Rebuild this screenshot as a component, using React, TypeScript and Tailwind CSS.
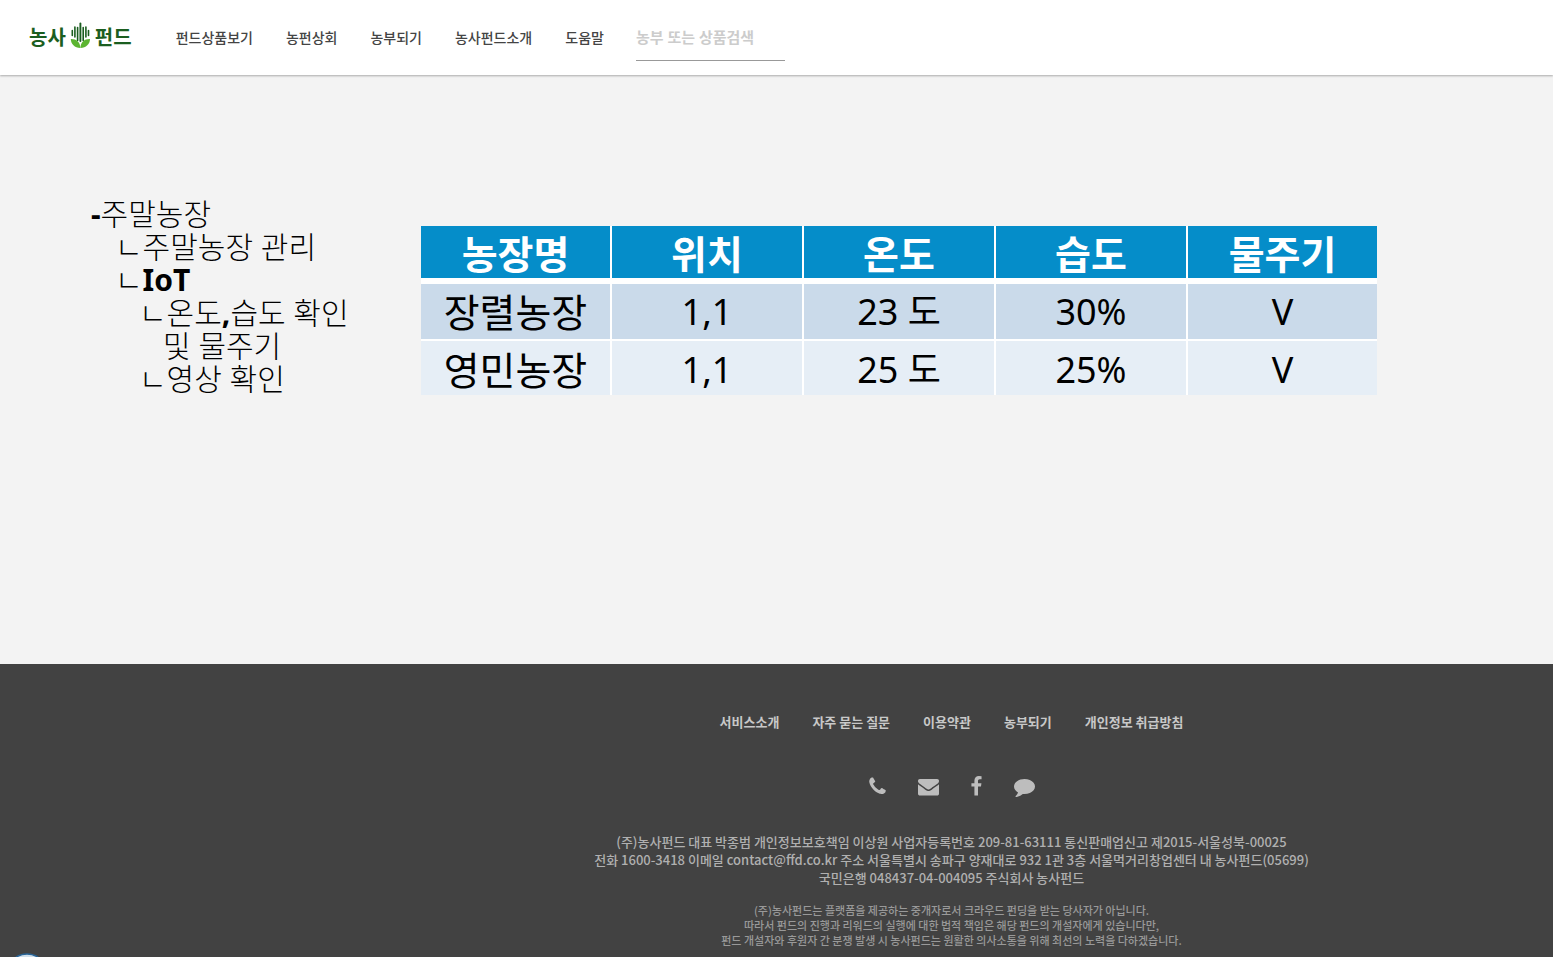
const navItems = ['펀드상품보기', '농펀상회', '농부되기', '농사펀드소개', '도움말'];
const footerLinks = ['서비스소개', '자주 묻는 질문', '이용약관', '농부되기', '개인정보 취급방침'];
const columns = ['농장명', '위치', '온도', '습도', '물주기'];
const farms = [
  { name: '장렬농장', location: '1,1', temperature: '23 도', humidity: '30%', water: 'V' },
  { name: '영민농장', location: '1,1', temperature: '25 도', humidity: '25%', water: 'V' },
];
const contacts = [
  {
    label: '전화',
    size: 'w-[17px]',
    viewBox: '171 0 1451 1792',
    path: 'M1600 1240q0 27-10 70.5t-21 68.5q-21 50-122 106-94 51-186 51-27 0-53-3.500t-57.500-12.500-47-14.500-55.500-20.500-49-18q-98-35-175-83-127-79-264-216t-216-264q-48-77-83-175-3-9-18-49t-20.500-55.500-14.500-47-12.500-57.500-3.500-53q0-92 51-186 56-101 106-122 25-11 68.500-21t70.500-10q14 0 21 3 18 6 53 76 11 19 30 54t35 63.500 31 53.500q3 4 17.500 25t21.500 35.500 7 28.500q0 20-28.500 50t-62 55-62 53-28.500 46q0 9 5 22.500t8.500 20.500 14 24 11.500 19q76 137 174 235t235 174q2 1 19 11.500t24 14 20.500 8.500 22.500 5q18 0 46-28.500t53-62 55-62 50-28.500q14 0 28.500 7t35.500 21.500 25 17.500q25 15 53.500 31t63.500 35 54 30q70 35 76 53 3 7 3 21z',
  },
  {
    label: '이메일',
    size: 'w-[21px]',
    viewBox: '0 0 1792 1792',
    path: 'M1792 710v794q0 66-47 113t-113 47h-1472q-66 0-113-47t-47-113v-794q44 49 101 87 362 246 497 345 57 42 92.500 65.500t94.500 48 110 24.500h2q51 0 110-24.500t94.500-48 92.500-65.500q170-123 498-345 57-39 100-87zm0-294q0 79-49 151t-122 123q-376 261-468 325-10 7-42.500 31t-54 38.500-52 32.500-57.500 27-50 9h-2q-23 0-50-9t-57.500-27-52-32.500-54-38.500-42.500-31q-91-64-262-182.500t-205-142.500q-62-42-117-115.500t-55-136.500q0-78 41.500-130t118.500-52h1472q65 0 112.500 47t47.500 113z',
  },
  {
    label: '페이스북',
    size: 'w-[11px]',
    viewBox: '442 0 939 1792',
    path: 'M1343 12v264h-157q-86 0-116 36t-30 108v189h293l-39 296h-254v759h-306v-759h-255v-296h255v-218q0-186 104-288.500t277-102.500q147 0 228 12z',
  },
  {
    label: '채팅',
    size: 'w-[21px]',
    viewBox: '0 0 1792 1792',
    path: 'M1792 896q0 174-120 321.500t-326 233-450 85.500q-70 0-145-8-198 175-460 242-49 14-114 22-17 2-30.500-9t-17.500-29v-1q-3-4-.5-12t2-10 4.500-9.500l6-9 7-8.500 8-9q7-8 31-34.500t34.500-38 31-39.500 32.500-51 27-59 26-76q-157-89-247.500-220t-90.500-281q0-130 71-248.500t191-204.500 286-136.500 348-50.500q244 0 450 85.500t326 233 120 321.500z',
  },
];

function Logo() {
  return (
    <a href="#" aria-label="농사펀드" className="flex items-center gap-1 text-[20px] leading-6 font-bold text-[#1b5e20]">
      <span>농사</span>
      <svg width="21" height="34" viewBox="0 0 21 34" aria-hidden="true">
        <g stroke="#1b5e20" strokeWidth="1.600" strokeLinecap="round">
          <path d="M2.300 9.500v5M4.900 6v10M7.600 6.500v13M13.200 6.500v13M15.900 6v10M18.500 9.500v5" />
          <path d="M10.400 2.500v17.500" strokeWidth="1.900" />
        </g>
        <path d="M.8 18c5.400-.2 9.400 3 9.600 8.900c-5.600 0-9.600-3.900-9.600-8.900z" fill="#5cb531" />
        <path d="M20 18c-5.400-.2-9.400 3-9.600 8.900c5.600 0 9.600-3.900 9.600-8.900z" fill="#5cb531" />
      </svg>
      <span>펀드</span>
    </a>
  );
}

function Header() {
  return (
    <header className="flex h-[75px] shrink-0 items-center bg-white pl-[29px] shadow-[0_1px_2px_rgba(0,0,0,0.3)]">
      <Logo />
      <nav className="ml-11 flex items-center gap-[33px] text-[14px] font-medium text-[#444]">
        {navItems.map((item) => (
          <a key={item} href="#" className="whitespace-nowrap">
            {item}
          </a>
        ))}
      </nav>
      <input
        type="search"
        aria-label="농부 또는 상품검색"
        placeholder="농부 또는 상품검색"
        className="mb-[14px] ml-8 h-[47px] w-[149px] self-end border-b border-[#999] bg-transparent text-[15px] font-bold outline-none placeholder:text-[#ccc]"
      />
    </header>
  );
}

function Menu() {
  return (
    <nav className="w-[330px] shrink-0 text-[30px] leading-[33px] font-light text-black">
      <a href="#" className="block">
        <span className="font-bold">-</span>주말농장
      </a>
      <ul className="pl-6">
        <li>
          <a href="#" className="block">ㄴ주말농장 관리</a>
        </li>
        <li>
          <a href="#" className="block">
            ㄴ<span className="font-bold">IoT</span>
          </a>
          <ul className="pl-6">
            <li>
              <a href="#" className="block">
                <span className="block">
                  ㄴ온도<span className="font-bold">,</span>습도 확인
                </span>
                <span className="block pl-6">및 물주기</span>
              </a>
            </li>
            <li>
              <a href="#" className="block">ㄴ영상 확인</a>
            </li>
          </ul>
        </li>
      </ul>
    </nav>
  );
}

function FarmTable() {
  return (
    <table className="mt-[29px] w-full max-w-[956px] table-fixed border-separate border-spacing-0 bg-white text-center text-black">
      <thead>
        <tr className="h-[58px] text-[39px] leading-[48px] text-white">
          {columns.map((column) => (
            <th
              key={column}
              scope="col"
              className="w-48 border-r-2 border-b-[6px] border-white bg-[#058dc9] p-0 pt-1 font-bold first:w-[191px] last:w-auto last:border-r-0"
            >
              {column}
            </th>
          ))}
        </tr>
      </thead>
      <tbody className="text-[36px] leading-[50px]">
        {farms.map((farm) => (
          <tr key={farm.name} className="group h-[57px] bg-[#cadaea] last:h-[54px] last:bg-[#e6eef6]">
            <td className="border-r-2 border-b-2 border-white p-0 text-[39px] group-last:border-b-0 group-last:pt-1">{farm.name}</td>
            <td className="border-r-2 border-b-2 border-white p-0 group-last:border-b-0 group-last:pt-1">{farm.location}</td>
            <td className="border-r-2 border-b-2 border-white p-0 group-last:border-b-0 group-last:pt-1">{farm.temperature}</td>
            <td className="border-r-2 border-b-2 border-white p-0 group-last:border-b-0 group-last:pt-1">{farm.humidity}</td>
            <td className="border-b-2 border-white p-0 group-last:border-b-0 group-last:pt-1">{farm.water}</td>
          </tr>
        ))}
      </tbody>
    </table>
  );
}

function Footer() {
  return (
    <footer className="flex shrink-0 flex-col items-center bg-[#424242] pt-12 pb-[9px] pl-[350px] text-center font-['Noto_Sans_CJK_KR',sans-serif] font-medium">
      <nav className="flex gap-[33px] text-[13px] leading-5 font-bold text-[#c8c8c8]">
        {footerLinks.map((link) => (
          <a key={link} href="#">
            {link}
          </a>
        ))}
      </nav>
      <div className="mt-11 flex gap-8 text-[#bdbdbd]">
        {contacts.map((contact) => (
          <a key={contact.label} href="#" aria-label={contact.label}>
            <svg className={`h-[21px] ${contact.size}`} viewBox={contact.viewBox} fill="currentColor" aria-hidden="true">
              <path d={contact.path} />
            </svg>
          </a>
        ))}
      </div>
      <p className="mt-9 text-[13px] leading-[18px] text-[#b0b0b0]">
        (주)농사펀드 대표 박종범 개인정보보호책임 이상원 사업자등록번호 209-81-63111 통신판매업신고 제2015-서울성북-00025
        <br />
        전화 1600-3418 이메일 contact@ffd.co.kr 주소 서울특별시 송파구 양재대로 932 1관 3층 서울먹거리창업센터 내 농사펀드(05699)
        <br />
        국민은행 048437-04-004095 주식회사 농사펀드
      </p>
      <p className="mt-4 text-[11px] leading-[15px] text-[#999]">
        (주)농사펀드는 플랫폼을 제공하는 중개자로서 크라우드 펀딩을 받는 당사자가 아닙니다.
        <br />
        따라서 펀드의 진행과 리워드의 실행에 대한 법적 책임은 해당 펀드의 개설자에게 있습니다만,
        <br />
        펀드 개설자와 후원자 간 분쟁 발생 시 농사펀드는 원활한 의사소통을 위해 최선의 노력을 다하겠습니다.
      </p>
    </footer>
  );
}

export default function App() {
  return (
    <div className="flex min-h-screen flex-col bg-[#f3f3f3] font-['Noto_Sans','Noto_Sans_CJK_KR',sans-serif]">
      <Header />
      <main className="flex flex-1 items-start pt-[122px] pr-8 pl-[91px]">
        <Menu />
        <FarmTable />
      </main>
      <Footer />
      <svg className="fixed bottom-0 left-2" width="38" height="4" viewBox="0 0 38 4" aria-hidden="true">
        <circle cx="19" cy="21" r="20" fill="#cfdeea" stroke="#2a6496" strokeWidth="1.500" />
      </svg>
    </div>
  );
}
